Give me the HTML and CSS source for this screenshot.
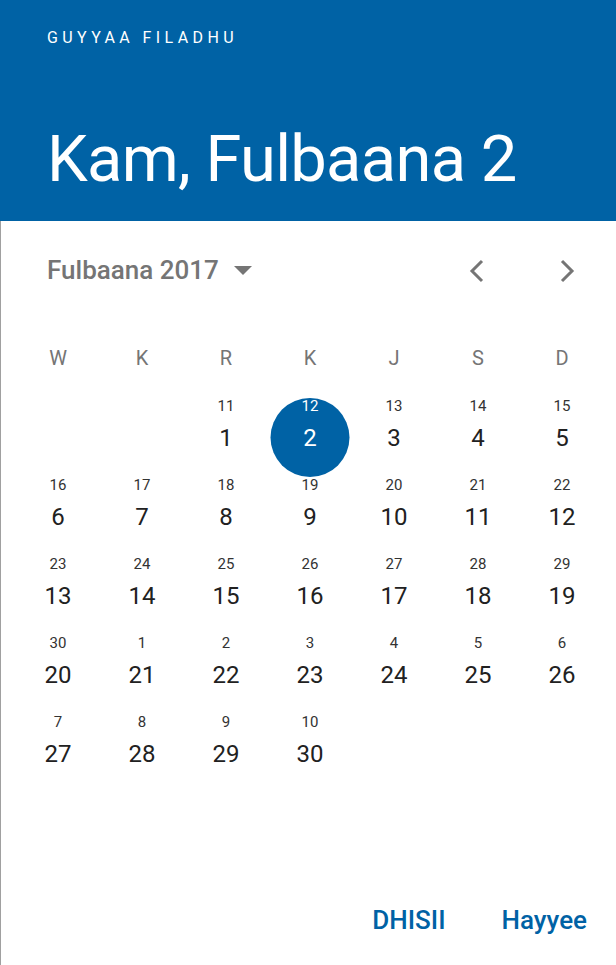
FILE: index.html
```html
<!DOCTYPE html>
<html>
<head>
<meta charset="utf-8">
<link rel="stylesheet" href="styles.css">
</head>
<body>
<div class="dialog">
  <header class="head">
    <div class="label">GUYYAA FILADHU</div>
    <div class="title">Kam, Fulbaana 2</div>
  </header>
  <div class="month-row">
    <div class="month">Fulbaana 2017
      <svg class="caret" width="18" height="9" viewBox="0 0 18 9"><path d="M0 0h18l-9 9z" fill="#757575"/></svg>
    </div>
    <div class="nav">
      <svg class="chev" width="16" height="24" viewBox="0 0 16 24"><path d="M13 2L3 12l10 10" fill="none" stroke="#757575" stroke-width="3"/></svg>
      <svg class="chev" width="16" height="24" viewBox="0 0 16 24"><path d="M3 2l10 10L3 22" fill="none" stroke="#757575" stroke-width="3"/></svg>
    </div>
  </div>
  <div class="weekdays">
    <span>W</span><span>K</span><span>R</span><span>K</span><span>J</span><span>S</span><span>D</span>
  </div>
  <div class="grid">
    <div class="cell empty"></div>
    <div class="cell empty"></div>
    <div class="cell"><span class="s">11</span><span class="b">1</span></div>
    <div class="cell sel"><span class="s">12</span><span class="b">2</span></div>
    <div class="cell"><span class="s">13</span><span class="b">3</span></div>
    <div class="cell"><span class="s">14</span><span class="b">4</span></div>
    <div class="cell"><span class="s">15</span><span class="b">5</span></div>
    <div class="cell"><span class="s">16</span><span class="b">6</span></div>
    <div class="cell"><span class="s">17</span><span class="b">7</span></div>
    <div class="cell"><span class="s">18</span><span class="b">8</span></div>
    <div class="cell"><span class="s">19</span><span class="b">9</span></div>
    <div class="cell"><span class="s">20</span><span class="b">10</span></div>
    <div class="cell"><span class="s">21</span><span class="b">11</span></div>
    <div class="cell"><span class="s">22</span><span class="b">12</span></div>
    <div class="cell"><span class="s">23</span><span class="b">13</span></div>
    <div class="cell"><span class="s">24</span><span class="b">14</span></div>
    <div class="cell"><span class="s">25</span><span class="b">15</span></div>
    <div class="cell"><span class="s">26</span><span class="b">16</span></div>
    <div class="cell"><span class="s">27</span><span class="b">17</span></div>
    <div class="cell"><span class="s">28</span><span class="b">18</span></div>
    <div class="cell"><span class="s">29</span><span class="b">19</span></div>
    <div class="cell"><span class="s">30</span><span class="b">20</span></div>
    <div class="cell"><span class="s">1</span><span class="b">21</span></div>
    <div class="cell"><span class="s">2</span><span class="b">22</span></div>
    <div class="cell"><span class="s">3</span><span class="b">23</span></div>
    <div class="cell"><span class="s">4</span><span class="b">24</span></div>
    <div class="cell"><span class="s">5</span><span class="b">25</span></div>
    <div class="cell"><span class="s">6</span><span class="b">26</span></div>
    <div class="cell"><span class="s">7</span><span class="b">27</span></div>
    <div class="cell"><span class="s">8</span><span class="b">28</span></div>
    <div class="cell"><span class="s">9</span><span class="b">29</span></div>
    <div class="cell"><span class="s">10</span><span class="b">30</span></div>
  </div>
  <div class="actions">
    <span class="btn">DHISII</span>
    <span class="btn">Hayyee</span>
  </div>
</div>
</body>
</html>
```

FILE: styles.css
```css
* { box-sizing: border-box; }
html, body { margin: 0; padding: 0; background: #fff; }
body { font-family: Roboto, "Noto Sans", sans-serif; }
.dialog {
  width: 616px;
  height: 965px;
  border-left: 1px solid #a0a0a0;
  position: relative;
  display: flex;
  flex-direction: column;
}
.head {
  background: #0062a5;
  color: #fff;
  height: 221px;
  margin-left: -1px;
  padding: 28px 0 0 47px;
}
.label {
  font-size: 16px;
  letter-spacing: 4.4px;
  line-height: 20px;
}
.title {
  font-size: 65px;
  letter-spacing: -0.7px;
  line-height: 78px;
  margin-top: 72px;
}
.month-row {
  display: flex;
  justify-content: space-between;
  align-items: center;
  height: 50px;
  margin-top: 24px;
  padding: 0 41px 0 46px;
}
.month {
  font-size: 26px;
  font-weight: 500;
  color: #757575;
  display: flex;
  align-items: center;
}
.caret { margin-left: 15px; margin-top: 1px; }
.nav { display: flex; gap: 74px; margin-top: 2px; }
.weekdays {
  display: grid;
  grid-template-columns: repeat(7, 84px);
  padding-left: 15px;
  margin-top: 51px;
  color: #757575;
  font-size: 20px;
  line-height: 24px;
}
.weekdays span { text-align: center; }
.grid {
  display: grid;
  grid-template-columns: repeat(7, 84px);
  grid-auto-rows: 79px;
  padding-left: 15px;
  margin-top: 27px;
}
.cell {
  position: relative;
  display: flex;
  flex-direction: column;
  align-items: center;
  color: #212121;
}
.cell .s {
  font-size: 15px;
  line-height: 18px;
  color: #333;
  position: relative;
  z-index: 1;
}
.cell .b {
  font-size: 24px;
  line-height: 28px;
  margin-top: 9px;
  position: relative;
  z-index: 1;
}
.cell.sel .s, .cell.sel .b { color: #fff; }
.cell.sel::before {
  content: "";
  position: absolute;
  width: 79px;
  height: 79px;
  border-radius: 50%;
  background: #0062a5;
  left: 50%;
  top: 1px;
  transform: translateX(-50%);
}
.actions {
  margin-top: auto;
  display: flex;
  justify-content: flex-end;
  gap: 56px;
  padding: 0 29px 30px 0;
}
.btn {
  font-size: 26px;
  font-weight: 500;
  color: #0062a5;
  line-height: 30px;
}
```
